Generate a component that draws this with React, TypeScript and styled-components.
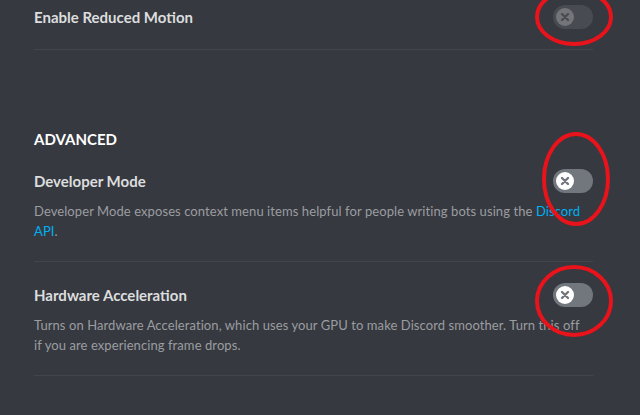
import React from "react";
import styled, { createGlobalStyle } from "styled-components";

const GlobalStyle = createGlobalStyle`
  html, body {
    margin: 0;
    padding: 0;
    background: #36393f;
  }
  body {
    font-family: Lato, "Open Sans", sans-serif;
  }
`;

type ToggleProps = { $disabled?: boolean };

const Toggle = ({ disabled }: { disabled?: boolean }) => (
  <Track $disabled={disabled}>
    <Knob>
      <svg width="10" height="10" viewBox="0 0 10 10">
        <path
          d="M2 2 L8 8 M8 2 L2 8"
          stroke="#72767d"
          strokeWidth="2.4"
          strokeLinecap="round"
        />
      </svg>
    </Knob>
  </Track>
);

export default function App() {
  return (
    <>
      <GlobalStyle />
      <Page>
        <Content>
          <Item>
            <Row>
              <Title>Enable Reduced Motion</Title>
              <Toggle disabled />
            </Row>
          </Item>
          <Divider />

          <SectionHeading>ADVANCED</SectionHeading>

          <Item>
            <Row>
              <Title>Developer Mode</Title>
              <Toggle />
            </Row>
            <Description>
              Developer Mode exposes context menu items helpful for people
              writing bots using the <Link>Discord</Link> <Link>API</Link>.
            </Description>
          </Item>
          <Divider />

          <Item $top>
            <Row>
              <Title>Hardware Acceleration</Title>
              <Toggle />
            </Row>
            <Description>
              Turns on Hardware Acceleration, which uses your GPU to make
              Discord smoother. Turn this off if you are experiencing frame
              drops.
            </Description>
          </Item>
          <Divider />
        </Content>

        {/* hand-drawn annotation circles over the toggles */}
        <Annotations width="640" height="415" viewBox="0 0 640 415">
          <ellipse cx="574" cy="17" rx="37" ry="27" />
          <ellipse cx="576" cy="179" rx="32" ry="45" />
          <ellipse cx="574" cy="301" rx="37" ry="34" />
        </Annotations>
      </Page>
    </>
  );
}

const Page = styled.div`
  position: relative;
  width: 640px;
  height: 415px;
  overflow: hidden;
  background: #36393f;
  padding-top: 5px;
  box-sizing: border-box;
`;

const Content = styled.div`
  display: flex;
  flex-direction: column;
  margin-left: 34px;
  width: 559px;
`;

const Item = styled.div<{ $top?: boolean }>`
  display: flex;
  flex-direction: column;
  padding-top: ${(p) => (p.$top ? "21px" : "0")};
  padding-bottom: 20px;
`;

const Row = styled.div`
  display: flex;
  align-items: center;
  justify-content: space-between;
  height: 24px;
`;

const Title = styled.div`
  font-size: 15px;
  font-weight: 700;
  color: #dcddde;
`;

const SectionHeading = styled.div`
  margin-top: 79px;
  margin-bottom: 20px;
  height: 20px;
  line-height: 20px;
  font-size: 15px;
  font-weight: 700;
  color: #ffffff;
`;

const Description = styled.div`
  margin-top: 8px;
  max-width: 556px;
  font-size: 13px;
  line-height: 20px;
  letter-spacing: 0.08px;
  color: #9b9da1;
`;

const Link = styled.span`
  color: #00b0f4;
`;

const Divider = styled.div`
  height: 1px;
  background: #42454b;
`;

const Track = styled.div<ToggleProps>`
  position: relative;
  flex-shrink: 0;
  width: 40px;
  height: 24px;
  border-radius: 12px;
  background: #72767d;
  opacity: ${(p) => (p.$disabled ? 0.3 : 1)};
`;

const Knob = styled.div`
  position: absolute;
  top: 3px;
  left: 3px;
  width: 18px;
  height: 18px;
  border-radius: 50%;
  background: #ffffff;
  display: flex;
  align-items: center;
  justify-content: center;
`;

const Annotations = styled.svg`
  position: absolute;
  left: 0;
  top: 0;
  pointer-events: none;
  ellipse {
    fill: none;
    stroke: #e8131b;
    stroke-width: 4;
  }
`;
